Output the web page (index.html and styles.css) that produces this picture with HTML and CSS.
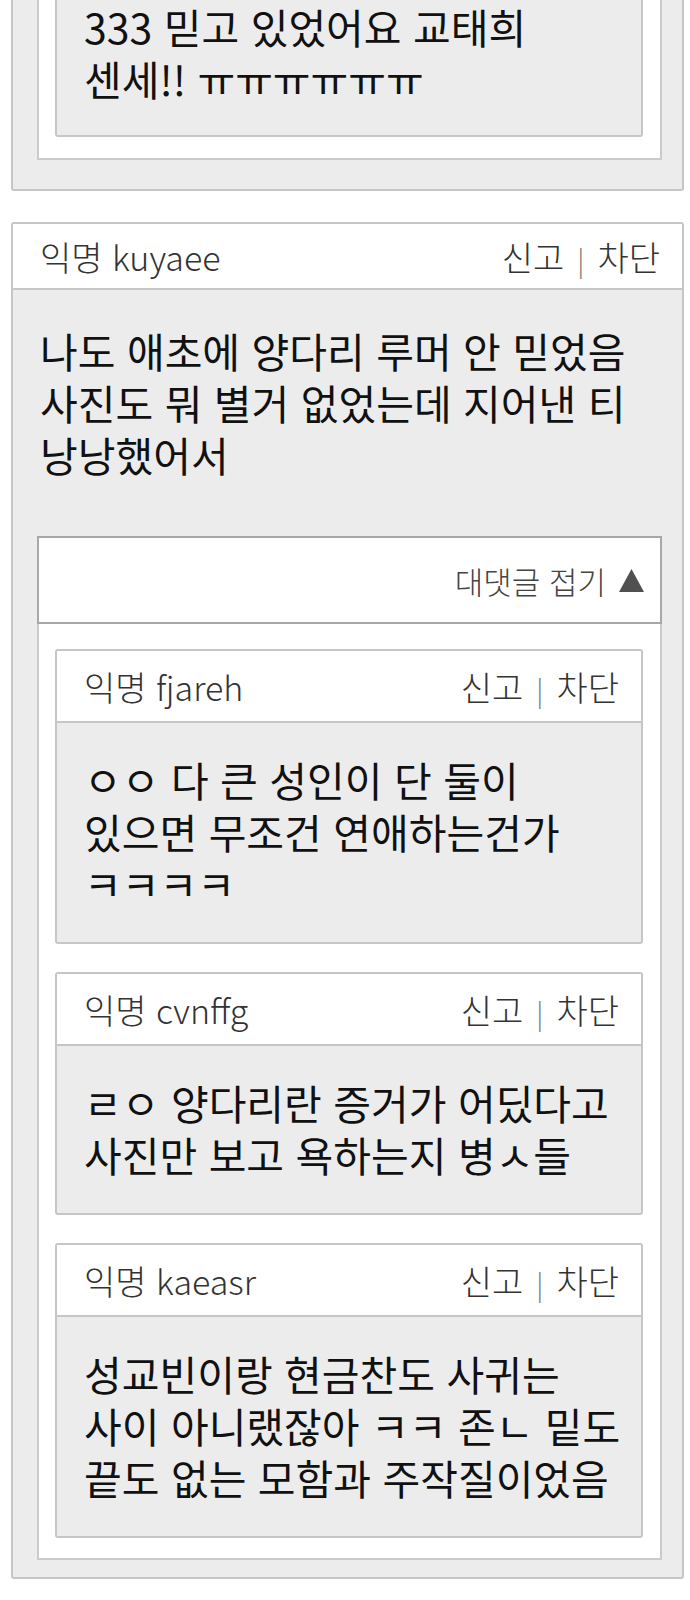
FILE: index.html
```html
<!DOCTYPE html>
<html lang="ko">
<head>
    <meta charset="UTF-8">
    <meta name="viewport" content="width=device-width, initial-scale=1.0">
    <title>댓글</title>
    <link rel="stylesheet" href="styles.css">
</head>
<body>

<div class="page">

    <!-- previous comment, scrolled past the top -->
    <div class="post post-cut">
        <div class="replies">
            <div class="reply-list reply-list-cut">
                <div class="reply reply-cut">
                    <p class="reply-text reply-text-cut">333 믿고 있었어요 교태희<br>센세!! ㅠㅠㅠㅠㅠㅠ</p>
                </div>
            </div>
        </div>
    </div>

    <div class="post">
        <div class="post-head">
            <span class="author">익명 kuyaee</span>
            <span class="actions">신고<span class="sep">|</span>차단</span>
        </div>
        <p class="post-text">나도 애초에 양다리 루머 안 믿었음 사진도 뭐 별거 없었는데 지어낸 티 낭낭했어서</p>

        <div class="replies">
            <div class="toggle">
                <span>대댓글 접기</span>
                <svg class="arrow" width="25" height="23" viewBox="0 0 25 23"><polygon points="12.5,0 25,23 0,23" fill="#505050"/></svg>
            </div>
            <div class="reply-list">
                <div class="reply">
                    <div class="reply-head">
                        <span class="author">익명 fjareh</span>
                        <span class="actions">신고<span class="sep">|</span>차단</span>
                    </div>
                    <p class="reply-text">ㅇㅇ 다 큰 성인이 단 둘이 있으면 무조건 연애하는건가 ㅋㅋㅋㅋ</p>
                </div>
                <div class="reply">
                    <div class="reply-head">
                        <span class="author">익명 cvnffg</span>
                        <span class="actions">신고<span class="sep">|</span>차단</span>
                    </div>
                    <p class="reply-text">ㄹㅇ 양다리란 증거가 어딨다고 사진만 보고 욕하는지 병ㅅ들</p>
                </div>
                <div class="reply">
                    <div class="reply-head">
                        <span class="author">익명 kaeasr</span>
                        <span class="actions">신고<span class="sep">|</span>차단</span>
                    </div>
                    <p class="reply-text">성교빈이랑 현금찬도 사귀는 사이 아니랬잖아 ㅋㅋ 존ㄴ 밑도 끝도 없는 모함과 주작질이었음</p>
                </div>
            </div>
        </div>
    </div>

</div>

</body>
</html>
```

FILE: styles.css
```css
body {
    margin: 0;
    background-color: #fff;
    font-family: "Noto Sans CJK KR", "Noto Sans", sans-serif;
    color: #111;
    word-break: keep-all;
}
.page {
    padding: 0 6px 19px 11px;
}
.post {
    background-color: #ececec;
    border: 2px solid #c6c6c6;
    border-radius: 3px;
    margin-bottom: 31px;
    padding-bottom: 17px;
}
.post-cut {
    border-top: none;
    border-radius: 0 0 3px 3px;
    padding-bottom: 29px;
}
.post-head,
.reply-head {
    display: flex;
    justify-content: space-between;
    align-items: center;
    padding: 0 22px 0 27px;
    background: #fff;
    border-bottom: 2px solid #c6c6c6;
    font-size: 34px;
    font-weight: 300;
    color: #333;
}
.post-head {
    height: 64px;
}
.reply-head {
    height: 70px;
}
.sep {
    margin: 0 13px;
    font-size: 28px;
    color: #777;
}
.post-text {
    margin: 0;
    padding: 34px 22px 56px 27px;
    font-size: 41px;
    line-height: 52px;
}
.replies {
    margin: 0 20px 0 24px;
}
.toggle {
    display: flex;
    justify-content: flex-end;
    align-items: center;
    gap: 13px;
    height: 84px;
    padding: 0 16px;
    background: #fff;
    border: 2px solid #a8a8a8;
    font-size: 31px;
    font-weight: 300;
    color: #444;
}
.reply-list {
    background: #fff;
    border: 2px solid #cbcbcb;
    border-top: none;
    padding: 25px 17px 20px 16px;
}
.reply-list-cut {
    padding-top: 0;
    padding-bottom: 21px;
}
.reply {
    background-color: #ececec;
    border: 2px solid #c6c6c6;
    border-radius: 3px;
}
.reply + .reply {
    margin-top: 28px;
}
.reply-cut {
    border-top: none;
    border-radius: 0 0 3px 3px;
}
.reply-text {
    margin: 0;
    padding: 30px 12px 33px 27px;
    font-size: 41px;
    line-height: 52px;
}
.reply-text-cut {
    padding-top: 0;
    padding-bottom: 31px;
}
```
